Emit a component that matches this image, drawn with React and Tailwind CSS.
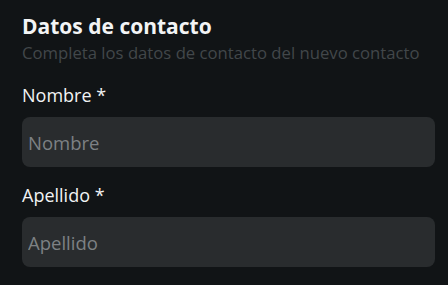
const Field = ({ label, placeholder }) => (
  <div className="flex flex-col">
    <label className="text-[18px] leading-[24px] text-[#f1f3f4] mb-[10px]">
      {label} *
    </label>
    <input
      type="text"
      placeholder={placeholder}
      className="h-[50px] w-full rounded-[8px] bg-[#292c2e] px-[6px] text-[18.5px] text-white placeholder:text-[#7d8184] outline-none"
    />
  </div>
);

export default function App() {
  return (
    <div
      className="min-h-screen bg-[#111416] px-[22px] pt-[11px] pr-[13px]"
      style={{ fontFamily: '"Open Sans", "Noto Sans", sans-serif' }}
    >
      <h2 className="text-[21px] font-bold leading-[30px] text-[#f3f4f5]">
        Datos de contacto
      </h2>
      <p className="text-[16.7px] leading-[24px] text-[#42474a]">
        Completa los datos de contacto del nuevo contacto
      </p>
      <div className="mt-[18px] flex flex-col gap-[16px]">
        <Field label="Nombre" placeholder="Nombre" />
        <Field label="Apellido" placeholder="Apellido" />
      </div>
    </div>
  );
}
